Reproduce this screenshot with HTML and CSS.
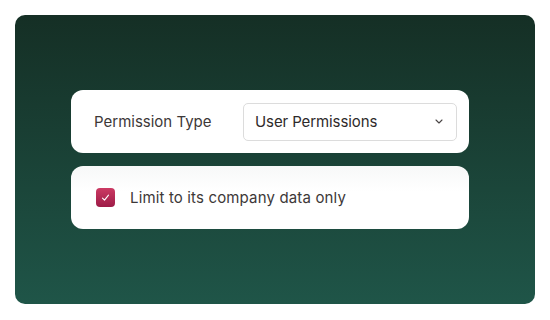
FILE: index.html
```html
<!DOCTYPE html>
<html lang="en">
<head>
  <meta charset="UTF-8" />
  <title>Permission Settings</title>
  <link rel="stylesheet" href="styles.css">
</head>
<body>
  <div class="panel">
    <div class="card">
      <span class="field-label">Permission Type</span>
      <div class="select">
        <span>User Permissions</span>
        <svg width="8" height="5" viewBox="0 0 8 5"><path d="M1 1l3 3 3-3" fill="none" stroke="#4a4545" stroke-width="1.1" stroke-linecap="round" stroke-linejoin="round"/></svg>
      </div>
    </div>
    <div class="card card-soft">
      <label class="check">
        <span class="box">
          <svg width="9" height="8" viewBox="0 0 9 8"><path d="M1.5 4.2l2 2 4-5" fill="none" stroke="#fff" stroke-width="1.1" stroke-linecap="round" stroke-linejoin="round"/></svg>
        </span>
        Limit to its company data only
      </label>
    </div>
  </div>
</body>
</html>
```

FILE: styles.css
```css
body {
  margin: 0;
  background: #fff;
  font-family: 'Inter', sans-serif;
}

.panel {
  margin: 15px 0 0 15px;
  width: 520px;
  height: 289px;
  border-radius: 10px;
  background: linear-gradient(to bottom, #152f25, #1f5548);
  box-sizing: border-box;
  padding: 75px 66px 0 56px;
  display: flex;
  flex-direction: column;
  gap: 13px;
}

.card {
  background: #fff;
  border-radius: 12px;
  height: 63px;
  box-sizing: border-box;
  padding: 0 12px 0 23px;
  display: flex;
  align-items: center;
}

.card-soft {
  background: linear-gradient(to bottom, #f7f8f8, #fff 40%);
}

.field-label {
  font-size: 15px;
  color: #3d3838;
  width: 149px;
}

.select {
  flex: 1;
  height: 38px;
  box-sizing: border-box;
  border: 1px solid #dcdcdc;
  border-radius: 5px;
  padding: 0 13px 0 11px;
  display: flex;
  align-items: center;
  justify-content: space-between;
  font-size: 15px;
  color: #2e2a2a;
  letter-spacing: -0.1px;
}

.check {
  display: flex;
  align-items: center;
  gap: 15px;
  font-size: 15px;
  color: #3d3838;
  padding-left: 2px;
  letter-spacing: 0.15px;
}

.box {
  width: 19px;
  height: 19px;
  border-radius: 4px;
  background: linear-gradient(to bottom, #cc3a63, #9d1b47);
  display: flex;
  align-items: center;
  justify-content: center;
}
```
